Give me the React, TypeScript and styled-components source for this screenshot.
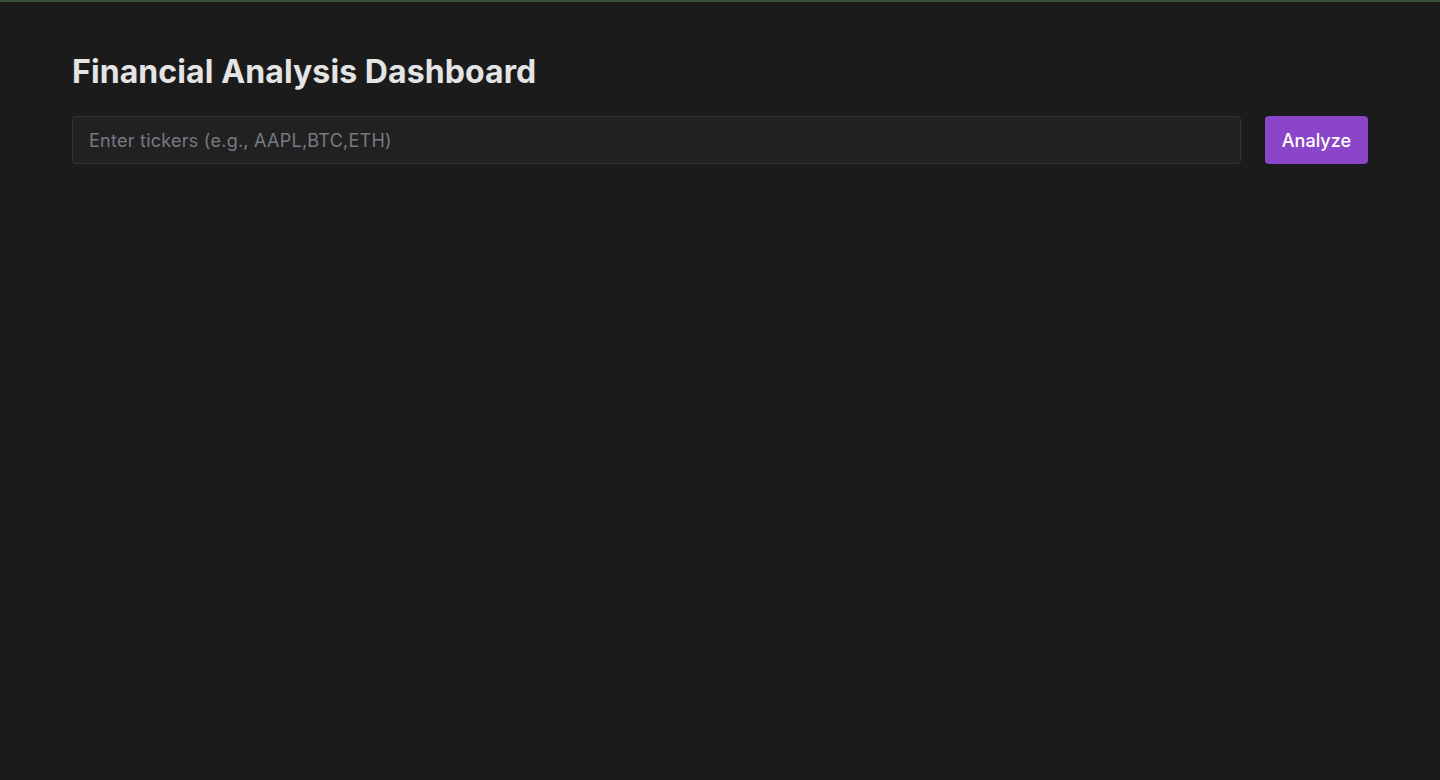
import { useState } from "react";
import styled, { createGlobalStyle } from "styled-components";

const GlobalStyle = createGlobalStyle`
  html, body {
    margin: 0;
    padding: 0;
    background: #1b1b1b;
  }
  body {
    font-family: Inter, "Noto Sans", sans-serif;
    color: #e6e6e6;
  }
  * {
    box-sizing: border-box;
  }
`;

const Page = styled.div`
  min-height: 780px;
  background: #1b1b1b;
  border-top: 2px solid #37513b;
`;

const Container = styled.main`
  padding: 50px 72px 0;
`;

const Title = styled.h1`
  margin: 0 0 25px;
  font-size: 32px;
  line-height: 39px;
  font-weight: 700;
  color: #e4e4e4;
  letter-spacing: 0.1px;
`;

const SearchRow = styled.div`
  display: flex;
  gap: 24px;
`;

const TickerInput = styled.input`
  flex: 1;
  height: 48px;
  padding: 0 16px;
  background: #212121;
  border: 1px solid #333333;
  border-radius: 4px;
  color: #e6e6e6;
  font-family: Inter, "Noto Sans", sans-serif;
  font-size: 18px;
  letter-spacing: 0.25px;
  outline: none;

  &::placeholder {
    color: #767b83;
  }

  &:focus {
    border-color: #8a45c8;
  }
`;

const AnalyzeButton = styled.button`
  height: 48px;
  padding: 0 17px;
  background: #8a45c8;
  border: none;
  border-radius: 4px;
  color: #ffffff;
  font-family: Inter, "Noto Sans", sans-serif;
  font-size: 18px;
  font-weight: 500;
  cursor: pointer;

  &:hover {
    background: #9652d4;
  }
`;

export default function App() {
  const [tickers, setTickers] = useState("");

  return (
    <Page>
      <GlobalStyle />
      <Container>
        <Title>Financial Analysis Dashboard</Title>
        <SearchRow>
          <TickerInput
            value={tickers}
            onChange={(e) => setTickers(e.target.value)}
            placeholder="Enter tickers (e.g., AAPL,BTC,ETH)"
          />
          <AnalyzeButton>Analyze</AnalyzeButton>
        </SearchRow>
      </Container>
    </Page>
  );
}
